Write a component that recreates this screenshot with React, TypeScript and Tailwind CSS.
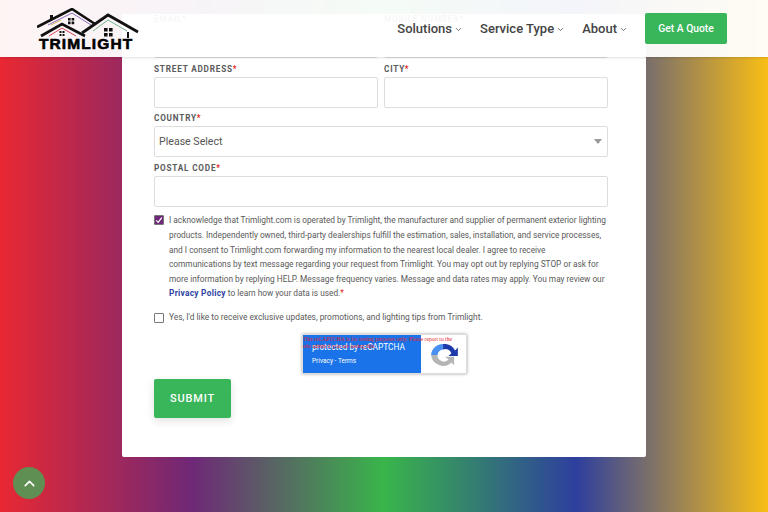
import { ChevronDown, ChevronUp } from "lucide-react";

const Label = ({ text }: { text: string }) => (
  <label className="block h-[11px] mb-[2px] text-[8.2px] leading-[11px] font-bold uppercase tracking-[0.8px] text-[#5a5a5a]">
    {text}
    <span className="text-[#e02020]">*</span>
  </label>
);

const Field = ({ text }: { text: string }) => (
  <div>
    <Label text={text} />
    <div className="h-[31px] bg-white border border-[#ddd] rounded-[2px]" />
  </div>
);

const Logo = () => (
  <div className="flex flex-col items-start w-[102px]">
    <svg viewBox="0 0 102 30" className="w-[102px] h-[30px]">
      <path d="M13 12 V7 h3 v4 z" fill="#111" />
      <path d="M0 19 L35 1 L58 16" fill="none" stroke="#111" strokeWidth="2.6" />
      <path d="M11 17 L35 5 L54 17" fill="none" stroke="#8a6fc0" strokeWidth="1" />
      <path d="M14 17 L24 12" fill="none" stroke="#d9b45a" strokeWidth="1" />
      <path d="M4 28 L25 16 L48 28" fill="none" stroke="#111" strokeWidth="2.8" />
      <path d="M12 28 L25 20 L39 28" fill="none" stroke="#d8475a" strokeWidth="1" />
      <path d="M45 25 L71 7 L101 24" fill="none" stroke="#111" strokeWidth="2.8" />
      <path d="M56 23 L71 12 L90 23" fill="none" stroke="#6fb58a" strokeWidth="1" />
      <path d="M91 24 V30" stroke="#111" strokeWidth="2" />
      <path d="M31 10 h2.6 v2.6 h-2.6 z M34.6 10 h2.6 v2.6 h-2.6 z M31 13.6 h2.6 v2.6 h-2.6 z M34.6 13.6 h2.6 v2.6 h-2.6 z" fill="#111" />
      <path d="M67 20 h3.6 v3.6 h-3.6 z M72 20 h3.6 v3.6 h-3.6 z M67 25 h3.6 v3.6 h-3.6 z M72 25 h3.6 v3.6 h-3.6 z" fill="#111" />
      <path d="M22.5 23 h2 v2 h-2 z M25.5 23 h2 v2 h-2 z M22.5 26 h2 v2 h-2 z M25.5 26 h2 v2 h-2 z" fill="#111" />
    </svg>
    <span className="ml-[2px] font-['Liberation_Sans',sans-serif] text-[15.5px] leading-[12px] font-bold tracking-[1.1px] text-black [-webkit-text-stroke:0.6px_#000]">
      TRIMLIGHT
    </span>
  </div>
);

const NavItem = ({ text }: { text: string }) => (
  <span className="flex items-center gap-[2px] text-[13px] font-medium text-[#444]">
    {text}
    <ChevronDown className="w-[9px] h-[9px] mt-[2px]" strokeWidth={2} />
  </span>
);

const RecaptchaMark = () => (
  <svg viewBox="0 0 30 26" className="w-[28px] h-[24px]">
    <path d="M1 13 A13 13 0 0 1 14 1 V7 A7 7 0 0 0 8 13 Z" fill="#4a90f0" />
    <path d="M14 1 H17 A13 13 0 0 1 27 8 L30 5 V14 H20 L23 11 A7 7 0 0 0 14 7 Z" fill="#1c3aa9" />
    <path d="M1 13 H8 A7 7 0 0 0 20 18 L16 15 H26 V24 L23 21 A13 13 0 0 1 1 13 Z" fill="#b5b5b5" />
  </svg>
);

export default function App() {
  return (
    <div className="relative w-[768px] h-[512px] overflow-hidden flex flex-col items-center justify-end pb-[55px] font-['Roboto',sans-serif] bg-[linear-gradient(to_right,#e92832,#6f2877_25%,#39b54a_50%,#2e3f9e_75%,#f9be15)]">
      <div className="w-[524px] shrink-0 bg-white rounded-[2px] pl-[32px] pr-[38px] pb-[39px] flex flex-col">
        <div className="grid grid-cols-2 gap-x-[6px]">
          <Field text="Email" />
          <Field text="Mobile Number" />
        </div>
        <div className="grid grid-cols-2 gap-x-[6px] mt-[6px]">
          <Field text="Street Address" />
          <Field text="City" />
        </div>
        <div className="mt-[5px]">
          <Label text="Country" />
          <div className="h-[31px] bg-white border border-[#ddd] rounded-[2px] flex items-center justify-between pl-[4px] pr-[5px] pt-[1px] text-[10.6px] text-[#555]">
            Please Select
            <span className="w-0 h-0 border-x-[4px] border-x-transparent border-t-[5px] border-t-[#999]" />
          </div>
        </div>
        <div className="mt-[6px]">
          <Field text="Postal Code" />
        </div>

        <div className="flex gap-[5px] mt-[6.6px]">
          <span className="w-[10px] h-[10px] mt-[2px] shrink-0 rounded-[1px] bg-[#6f2877] border border-[#777] flex items-center justify-center">
            <svg viewBox="0 0 10 10" className="w-[8px] h-[8px]">
              <path d="M1.5 5.5 L4 8 L8.5 2" fill="none" stroke="#fff" strokeWidth="1.6" />
            </svg>
          </span>
          <p className="text-[8.3px] leading-[14.6px] text-[#5a5a5a] whitespace-nowrap">
            I acknowledge that Trimlight.com is operated by Trimlight, the manufacturer and supplier of permanent exterior lighting
            <br />
            products. Independently owned, third-party dealerships fulfill the estimation, sales, installation, and service processes,
            <br />
            and I consent to Trimlight.com forwarding my information to the nearest local dealer. I agree to receive
            <br />
            communications by text message regarding your request from Trimlight. You may opt out by replying STOP or ask for
            <br />
            more information by replying HELP. Message frequency varies. Message and data rates may apply. You may review our
            <br />
            <a className="font-bold text-[#2b3f9e] tracking-[0.3px]">Privacy Policy</a> to learn how your data is used.
            <span className="text-[#e02020]">*</span>
          </p>
        </div>

        <div className="flex gap-[5px] mt-[9px] items-center h-[15px]">
          <span className="w-[10px] h-[10px] shrink-0 rounded-[1px] bg-white border border-[#777]" />
          <p className="text-[8.4px] leading-[14.6px] text-[#5a5a5a]">
            Yes, I'd like to receive exclusive updates, promotions, and lighting tips from Trimlight.
          </p>
        </div>

        <div className="relative self-start ml-[148px] mt-[9px] w-[165px] h-[40px] flex bg-white border border-[#ddd] shadow-[0_0_3px_rgba(0,0,0,0.35)]">
          <div className="w-[118px] bg-[#1a73e8] pl-[9px] pt-[7px] text-white">
            <div className="text-[8.3px] leading-[11px]">protected by reCAPTCHA</div>
            <div className="text-[6.5px] leading-[8px] mt-[4px]">Privacy - Terms</div>
          </div>
          <div className="flex-1 flex items-center justify-center pt-[1px]">
            <RecaptchaMark />
          </div>
          <div className="absolute left-0 top-[1px] w-[165px] font-['Liberation_Serif',serif] text-[5.6px] leading-[7px] text-[#e0202a]">
            This reCAPTCHA is for testing purposes only. Please report to the
            <br />
            site admin if you are seeing this.
          </div>
        </div>

        <button className="mt-[5px] w-[77px] h-[39px] pt-[1px] bg-[#39b55a] rounded-[2px] text-white text-[11px] font-medium tracking-[0.8px] shadow-[0_3px_8px_rgba(0,0,0,0.12)]">
          SUBMIT
        </button>
      </div>

      {/* fixed header sits over the form */}
      <header className="absolute left-0 top-0 w-full h-[57px] bg-white/95 shadow-[0_1px_2px_rgba(0,0,0,0.12)] flex items-center pl-[37px] pr-[41px]">
        <Logo />
        <nav className="ml-auto flex items-center gap-[17px]">
          <NavItem text="Solutions" />
          <NavItem text="Service Type" />
          <NavItem text="About" />
        </nav>
        <button className="ml-[17px] w-[82px] h-[31px] bg-[#39b55a] rounded-[2px] text-white text-[10.3px] font-medium">
          Get A Quote
        </button>
      </header>

      <button className="absolute left-[13px] top-[467px] w-[32px] h-[32px] rounded-full bg-[#5f8f52] flex items-center justify-center text-white">
        <ChevronUp className="w-[17px] h-[17px]" strokeWidth={2.2} />
      </button>
    </div>
  );
}
